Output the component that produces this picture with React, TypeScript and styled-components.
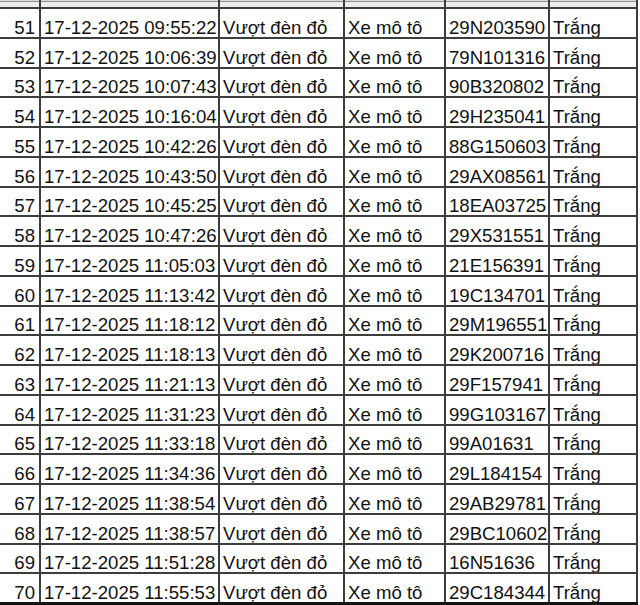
import React from "react";
import styled, { createGlobalStyle } from "styled-components";

const GlobalStyle = createGlobalStyle`
  html, body {
    margin: 0;
    padding: 0;
    background: #ffffff;
  }
`;

type Violation = {
  no: number;
  time: string;
  plate: string;
};

// danh sách vi phạm (đoạn đang hiển thị trên bảng tính)
const rows: Violation[] = [
  { no: 51, time: "09:55:22", plate: "29N203590" },
  { no: 52, time: "10:06:39", plate: "79N101316" },
  { no: 53, time: "10:07:43", plate: "90B320802" },
  { no: 54, time: "10:16:04", plate: "29H235041" },
  { no: 55, time: "10:42:26", plate: "88G150603" },
  { no: 56, time: "10:43:50", plate: "29AX08561" },
  { no: 57, time: "10:45:25", plate: "18EA03725" },
  { no: 58, time: "10:47:26", plate: "29X531551" },
  { no: 59, time: "11:05:03", plate: "21E156391" },
  { no: 60, time: "11:13:42", plate: "19C134701" },
  { no: 61, time: "11:18:12", plate: "29M196551" },
  { no: 62, time: "11:18:13", plate: "29K200716" },
  { no: 63, time: "11:21:13", plate: "29F157941" },
  { no: 64, time: "11:31:23", plate: "99G103167" },
  { no: 65, time: "11:33:18", plate: "99A01631" },
  { no: 66, time: "11:34:36", plate: "29L184154" },
  { no: 67, time: "11:38:54", plate: "29AB29781" },
  { no: 68, time: "11:38:57", plate: "29BC10602" },
  { no: 69, time: "11:51:28", plate: "16N51636" },
  { no: 70, time: "11:55:53", plate: "29C184344" },
];

const COLUMNS = 6;

function App() {
  return (
    <>
      <GlobalStyle />
      <Viewport>
        <Sheet>
          {Array.from({ length: COLUMNS }).map((_, i) => (
            <CutCell key={`cut-${i}`} />
          ))}
          {rows.map((r) => (
            <React.Fragment key={r.no}>
              <Cell $align="right">{r.no}</Cell>
              <Cell>17-12-2025 {r.time}</Cell>
              <Cell>Vượt đèn đỏ</Cell>
              <Cell>Xe mô tô</Cell>
              <Cell>{r.plate}</Cell>
              <Cell>Trắng</Cell>
            </React.Fragment>
          ))}
        </Sheet>
      </Viewport>
    </>
  );
}

const Viewport = styled.div`
  width: 640px;
  height: 605px;
  overflow: hidden;
  background: #ffffff;
`;

const Sheet = styled.div`
  display: grid;
  grid-template-columns: 39px 177px 123px 99px 102px 86px;
  grid-template-rows: 7px repeat(20, 27.75px);
  gap: 2px;
  width: 638px;
  padding-right: 2px;
  box-sizing: border-box;
  background: #3d3d3d;
  border-bottom: 3px solid #141414;
`;

const CutCell = styled.div`
  background: linear-gradient(
    #dadada 0 1px,
    #8f8f8f 1px 2px,
    #ececec 2px 100%
  );
`;

const Cell = styled.div<{ $align?: "left" | "right" }>`
  display: flex;
  align-items: flex-end;
  justify-content: ${(p) => (p.$align === "right" ? "flex-end" : "flex-start")};
  padding: 0 ${(p) => (p.$align === "right" ? "4px" : "0")} 0
    ${(p) => (p.$align === "right" ? "0" : "3px")};
  background: #ffffff;
  color: #111111;
  font-family: "Liberation Sans", Arial, sans-serif;
  font-size: 18.6px;
  line-height: 18px;
  white-space: nowrap;
  overflow: hidden;
`;

export default App;
